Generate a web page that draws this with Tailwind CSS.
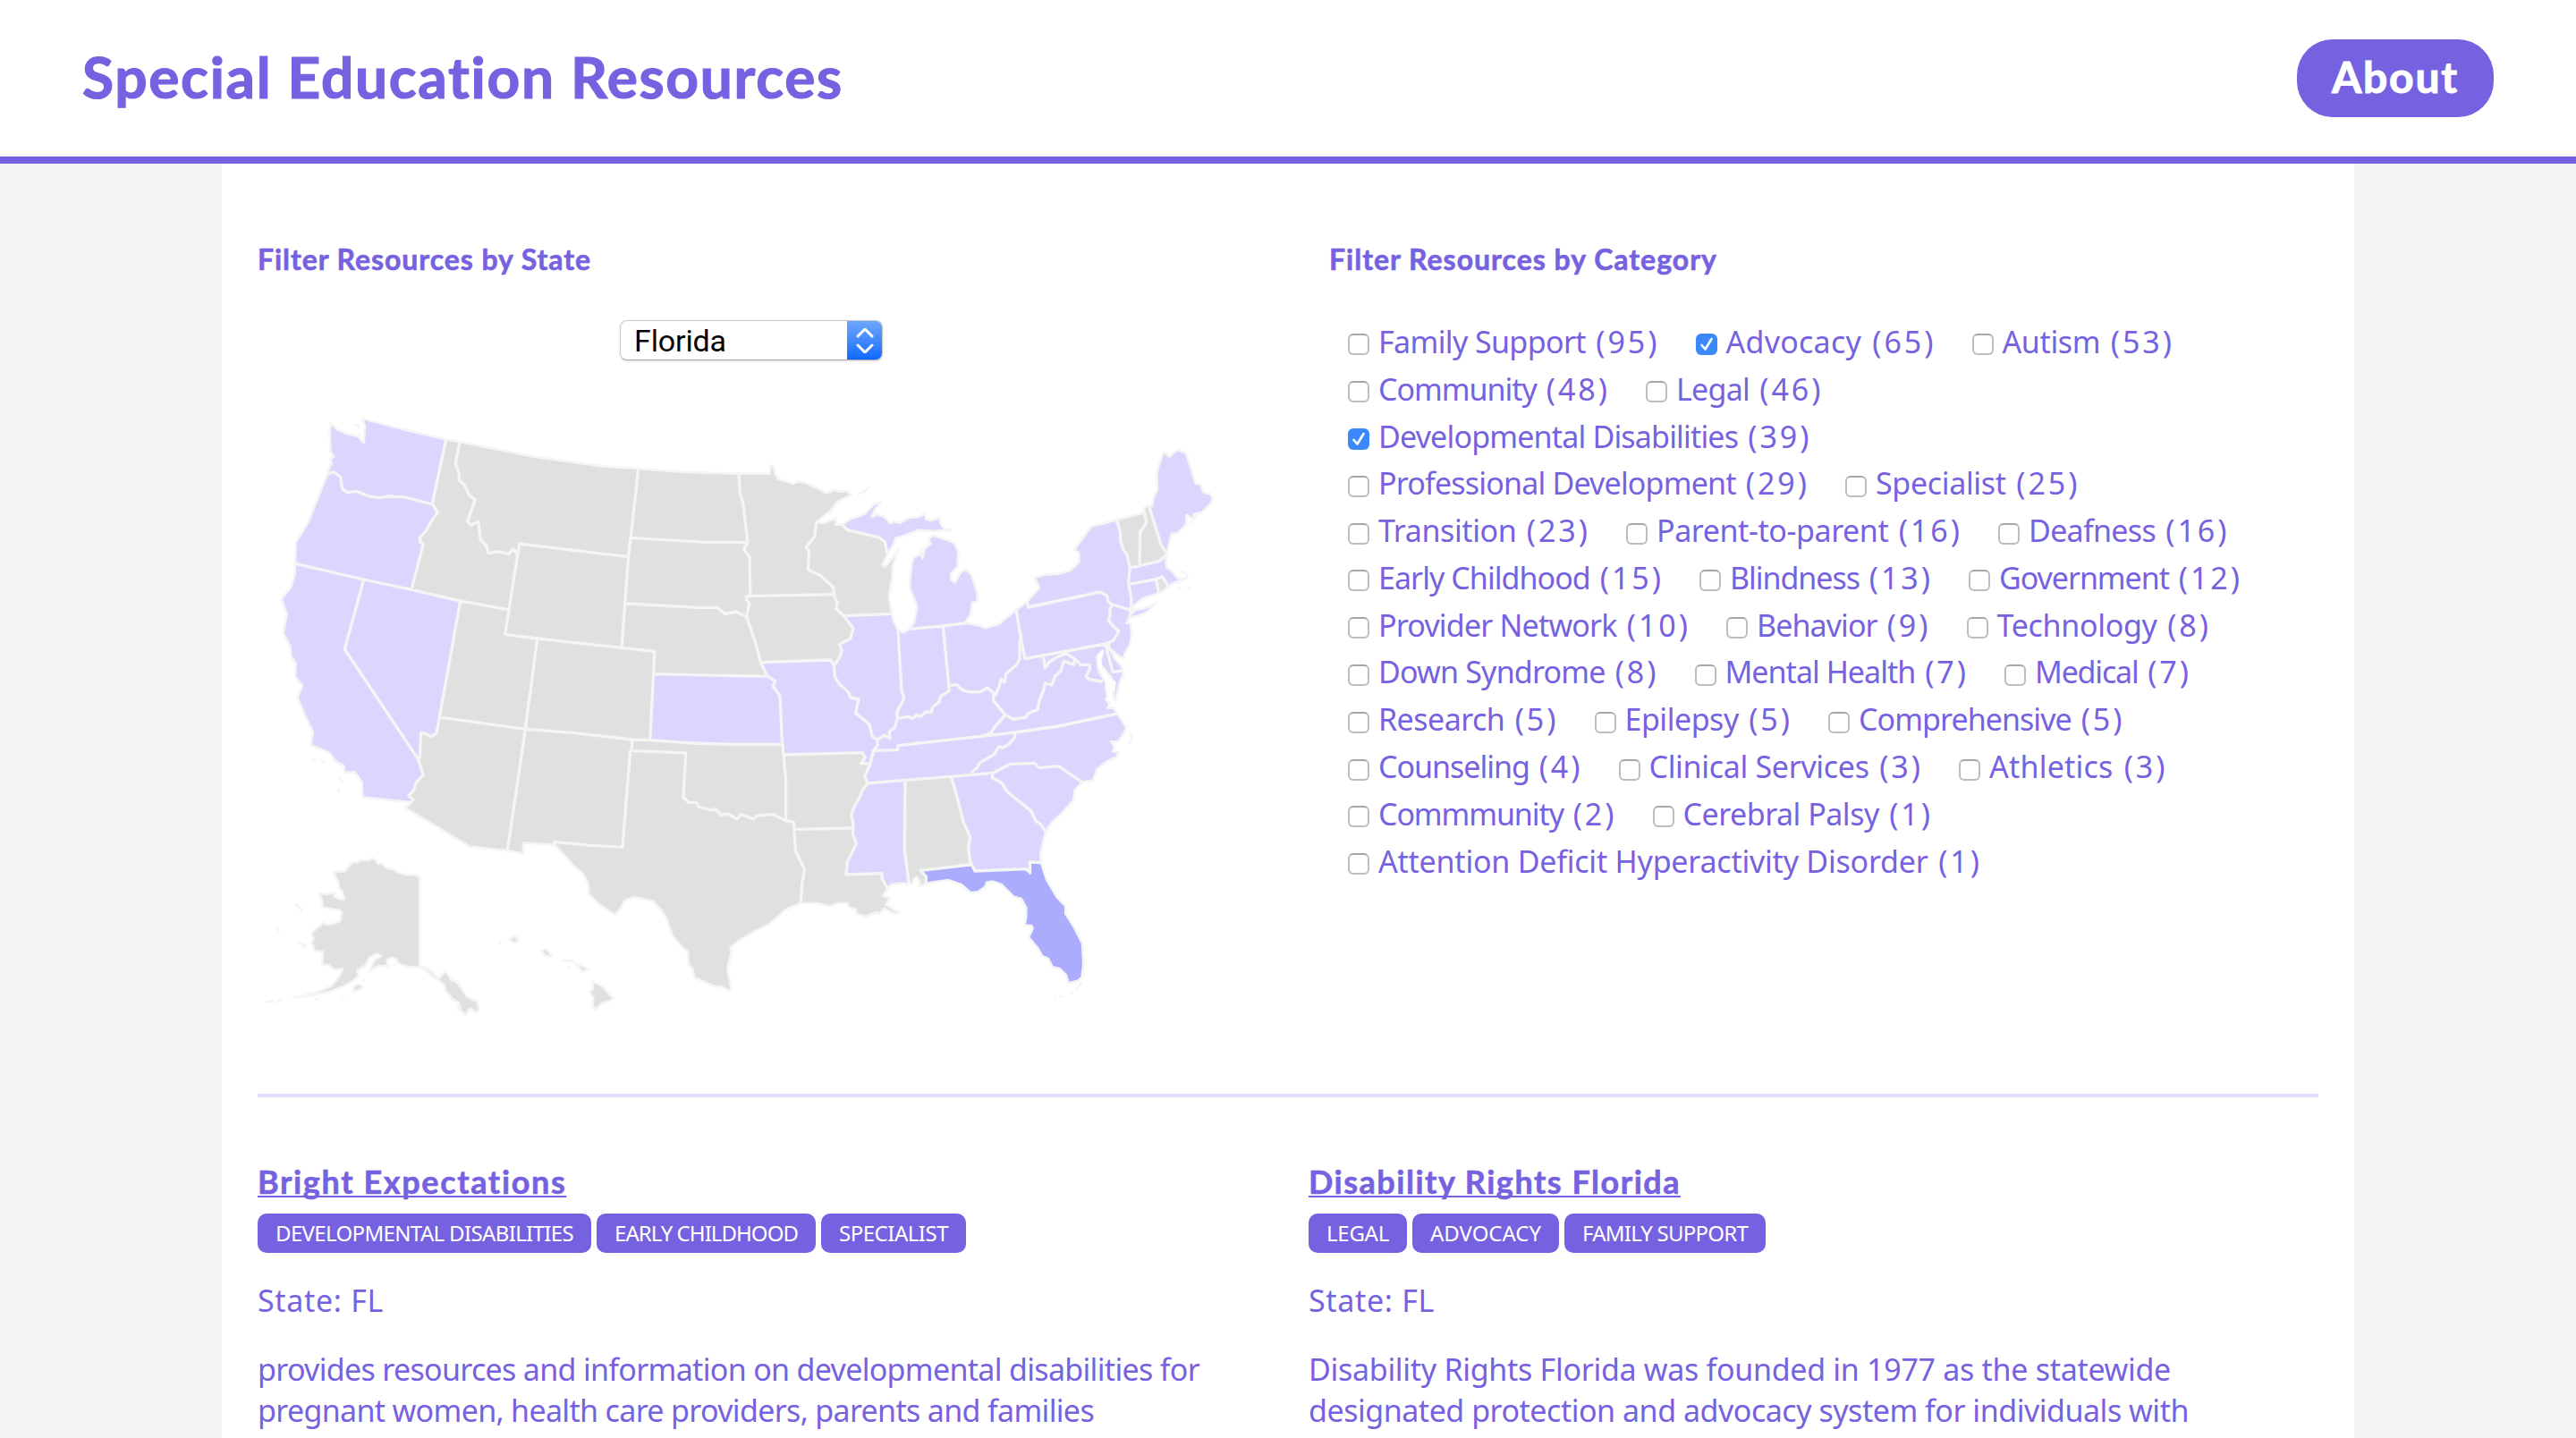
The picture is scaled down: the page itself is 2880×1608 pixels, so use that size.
<!DOCTYPE html>
<html lang="en">
<head>
<meta charset="utf-8">
<title>Special Education Resources</title>
<script src="https://cdn.jsdelivr.net/npm/@tailwindcss/browser@4"></script>
</head>
<body class="h-[1608px] overflow-hidden bg-[#f4f6f5] font-['Noto_Sans',sans-serif] text-[34px] leading-[46px] text-[#7662e0]">
<header class="flex h-[183px] items-center justify-between border-b-8 border-[#7662e0] bg-white pr-[92px] pl-[92px]">
  <h1 class="pb-1 font-['Lato',sans-serif] text-[64px] leading-[80px] font-bold whitespace-nowrap [-webkit-text-stroke:1.2px_#7662e0]"><span data-w="852">Special Education Resources</span></h1>
  <a class="flex h-[87px] w-[220px] items-center justify-center rounded-[40px] bg-[#7662e0] pb-[3px] font-['Lato',sans-serif] text-[48px] leading-[60px] font-bold whitespace-nowrap text-white [-webkit-text-stroke:1px_#fff]"><span data-w="142">About</span></a>
</header>

<main class="mx-auto h-[1425px] w-[2384px] bg-white px-10 pt-[87px]">
  <section class="flex">
    <div class="w-[1104px]">
      <h2 class="font-['Lato',sans-serif] text-[32px] leading-[40px] font-bold whitespace-nowrap [-webkit-text-stroke:0.6px_#7662e0]"><span data-w="373">Filter Resources by State</span></h2>
      <div class="mx-auto mt-[48px] flex h-[45px] w-[294px] items-stretch overflow-hidden rounded-[8px] border border-[#c9c9c9] border-b-[#ababab] bg-white shadow-sm">
        <span class="flex flex-1 items-center pl-[15px] font-['Roboto','Liberation_Sans',sans-serif] text-[34px] leading-[44px] text-black"><span data-w="103">Florida</span></span>
        <span class="-my-px -mr-px flex w-10 items-center justify-center bg-gradient-to-b from-[#6fa8fb] to-[#0566fe]">
          <svg class="h-7 w-6" viewBox="0 0 24 28" fill="none" stroke="#fff" stroke-width="3" stroke-linecap="round" stroke-linejoin="round"><path d="M4 9l8-8 8 8M4 19l8 8 8-8"/></svg>
        </span>
      </div>

      <svg class="mt-[47px] block h-[710px] w-[1096px]" viewBox="24 0 3288 2130" stroke-linejoin="round" stroke-linecap="round">
        <defs>
          <path id="usa" d="M270,70 290,90 320,104 362,114 380,136 382,100 384,80 376,54 520,92 656,124 702,132 800,152 950,182 1080,200 1180,214 1300,222 1460,234 1638,239 1742,239 1744,212 1756,214 1760,240 1770,258 1810,268 1820,273 1836,265 1860,268 1890,284 1900,286 1930,304 1945,300 1960,292 1970,300 2000,297 2016,310 1970,332 1945,365 1898,402 1920,405 1965,388 1962,410 1985,410 2010,392 2060,374 2092,340 2116,336 2095,358 2084,384 2100,376 2125,382 2145,405 2160,400 2180,404 2205,388 2240,384 2262,374 2266,392 2285,396 2310,386 2314,404 2326,422 2350,428 2290,432 2240,428 2210,440 2180,452 2165,455 2155,480 2136,510 2120,545 2128,552 2172,496 2155,545 2152,590 2142,650 2152,710 2156,730 2172,762 2190,772 2208,760 2225,740 2236,685 2210,620 2218,540 2225,520 2244,510 2248,492 2254,524 2262,490 2282,474 2274,458 2290,446 2315,454 2360,470 2368,488 2374,500 2372,550 2350,575 2350,595 2364,603 2380,572 2400,560 2418,578 2438,640 2438,668 2420,672 2416,710 2396,740 2415,742 2445,748 2465,757 2510,744 2568,696 2605,668 2646,622 2630,588 2660,578 2710,575 2750,564 2780,534 2778,504 2764,492 2785,464 2820,416 2860,406 2905,394 2998,370 2998,352 3010,346 3024,348 3026,328 3042,292 3040,240 3045,215 3063,166 3082,182 3110,158 3138,170 3170,272 3188,276 3194,298 3208,306 3216,302 3228,322 3220,340 3190,370 3165,375 3160,390 3140,378 3138,410 3110,438 3090,440 3082,470 3074,508 3070,530 3072,552 3090,565 3110,590 3132,594 3090,608 3060,632 3045,640 2990,660 2960,685 2955,710 2950,722 2938,740 2952,742 2956,780 2950,810 2932,845 2928,860 2905,845 2882,825 2900,860 2922,885 2928,910 2916,940 2908,970 2902,998 2894,995 2898,940 2885,920 2872,905 2860,890 2850,875 2858,835 2840,850 2842,885 2850,910 2870,940 2868,960 2875,985 2868,995 2882,1010 2875,1025 2895,1025 2908,1045 2938,1090 2930,1110 2910,1138 2887,1138 2900,1158 2892,1170 2912,1175 2905,1190 2870,1205 2840,1230 2826,1268 2790,1274 2765,1300 2760,1335 2720,1380 2692,1405 2668,1438 2650,1510 2652,1544 2670,1600 2705,1660 2734,1690 2734,1715 2765,1765 2790,1815 2794,1885 2788,1930 2775,1940 2744,1948 2735,1920 2715,1900 2690,1894 2675,1865 2656,1858 2640,1830 2610,1794 2624,1765 2620,1756 2596,1754 2601,1730 2602,1695 2585,1665 2560,1658 2520,1618 2490,1607 2470,1610 2465,1625 2440,1642 2415,1645 2385,1618 2340,1602 2268,1613 2246,1624 2244,1605 2234,1592 2224,1600 2220,1615 2205,1616 2175,1613 2148,1618 2136,1632 2122,1655 2145,1662 2132,1685 2176,1712 2160,1716 2125,1698 2108,1716 2098,1710 2062,1726 2032,1714 2030,1700 2010,1695 2000,1680 1972,1680 1940,1690 1905,1680 1845,1680 1795,1702 1740,1750 1690,1775 1640,1804 1610,1828 1613,1845 1600,1900 1613,1968 1605,1973 1580,1960 1555,1958 1490,1930 1483,1900 1470,1885 1466,1842 1450,1830 1415,1788 1395,1730 1380,1705 1350,1673 1285,1659 1255,1672 1240,1700 1224,1718 1185,1695 1160,1675 1135,1650 1132,1612 1115,1582 1080,1550 1050,1515 1020,1484 916,1478 914,1513 862,1504 735,1490 520,1360 535,1341 376,1325 374,1275 350,1240 318,1242 312,1218 290,1208 262,1174 202,1150 210,1106 180,1045 158,990 174,950 150,920 152,876 136,850 134,820 110,772 122,710 104,660 135,620 148,580 150,540 152,470 195,400 230,310 260,238 262,222 272,205 268,190 280,182 268,165 266,100Z"/>
          <clipPath id="land"><use href="#usa"/></clipPath>
        </defs>
        <use href="#usa" fill="#dcd6fe"/>
        <g clip-path="url(#land)">
          <!-- states without resources -->
          <g fill="#dfe1e0">
            <path d="M656,124 610,340 628,370 604,402 590,430 568,452 570,470 580,474 540,628 704,666 634,1056 624,1110 605,1122 590,1112 572,1108 568,1190 562,1198 580,1250 556,1275 548,1300 530,1320 546,1332 535,1345 500,1360 700,2000 2200,2000 2200,1690 2136,1628 2118,1598 2118,1580 1998,1584 2002,1542 2032,1480 2020,1445 2022,1420 2016,1382 2026,1355 2046,1320 2050,1305 2070,1278 2060,1255 2078,1215 2048,1210 2062,1192 2052,1175 1790,1181 1782,1117 1776,985 1752,952 1760,935 1735,919 1712,872 1945,864 1957,882 1974,860 1984,832 1975,812 2012,792 2022,758 1992,718 2150,709 2200,600 2200,480 2136,506 2128,468 2106,452 2002,428 1985,410 2016,312 2016,250 1800,180Z"/>
            <path d="M2196,1270 2350,1257 2365,1305 2392,1410 2414,1458 2408,1490 2412,1551 2248,1570 2266,1590 2266,1640 2209,1640 2209,1615 2194,1505Z"/>
            <path d="M2905,390 2998,340 3014,345 3055,480 3078,508 3050,532 2950,555 2940,510 2928,495 2918,465 2918,435Z"/>
            <path d="M3038,593 3058,584 3085,618 3046,645Z"/>
          </g>
          <path fill="#dcd6fe" d="M1352,911 1735,919 1760,935 1752,952 1776,985 1782,1147 1620,1147 1340,1132Z"/>
          <path fill="#acacff" d="M2412,1551 2430,1572 2602,1565 2615,1578 2614,1542 2660,1544 2850,1700 2850,2000 2700,2000 2266,1650 2266,1590 2248,1570Z"/>
        </g>
        <g fill="none" stroke="#f4f6f5" stroke-width="10">
          <use href="#usa" stroke-width="8"/>
          <path d="M656,124 610,340 628,370 604,402 590,430 568,452 570,470 580,474 540,628M260,238 280,234 302,250 308,290 325,302 355,298 400,315 435,320 460,315 520,318 610,342M152,541 380,594 540,628 704,666 864,695M380,594 316,828 562,1196M704,666 634,1056 624,1110 605,1122 590,1112 572,1108 568,1190 562,1198 580,1250 556,1275 548,1300 530,1320 546,1332 535,1345 520,1358M702,132 688,205 700,240 700,262 716,275 735,312 754,326 728,398 740,412 764,400 772,460 792,482 798,506 830,500 866,508 882,492 894,508M1268,518 1140,503 902,474 854,778 962,792 1080,805 1245,823 1355,835 1352,910 1340,1130M962,794 922,1096 862,1504M634,1056 922,1096 1080,1108 1281,1131 1342,1133 1480,1143 1620,1147 1782,1147M1352,911 1735,919M1301,225 1268,518 1245,820M1282,455 1510,468 1666,470M1262,675 1500,688 1565,688 1592,710 1628,702 1666,720M1638,240 1642,305 1652,335 1668,470 1655,494 1674,518 1677,648M1664,650 1958,644M1664,650 1664,662 1673,675 1664,720 1692,800 1712,875 1735,919 1760,935 1752,952 1776,985 1782,1117 1788,1185 1796,1270 1796,1405M1712,872 1945,864 1957,882M1898,402 1892,450 1864,485 1874,500 1870,560 1910,580 1954,618 1960,655 1968,670 1964,692 1992,718 2022,758 2012,792 1975,812 1984,832 1974,860 1957,882 1960,920 1975,945 2006,972 2012,990 2040,996 2030,1042 2075,1078 2086,1120 2102,1134 2104,1150 2090,1168 2078,1215 2060,1255 2070,1278 2050,1305 2046,1320 2026,1355 2016,1382 2022,1420 2020,1445 2032,1480 2002,1542 1998,1584 2118,1580 2118,1598 2136,1628M1992,716 2150,709M1985,410 2002,428 2106,452 2128,468 2136,506"/>
          <path d="M2172,768 2184,965 2192,992 2168,1040 2170,1058 2162,1090 2142,1105 2145,1125 2125,1117 2102,1132M2208,760 2323,750 2400,740M2323,750 2344,968 2315,985 2310,1005 2288,1022 2284,1040 2265,1038 2248,1054 2235,1048 2222,1060 2205,1054 2168,1060M2344,950 2370,947 2388,965 2415,972 2450,970 2472,958 2500,980 2512,950 2518,928 2530,938 2535,910 2570,880 2580,860 2580,800 2586,785M2568,696 2585,795 2598,860 2868,810M2605,668 2608,687 2850,636 2872,648 2878,668 2890,678 2882,695 2884,715 2877,732 2912,768 2895,798 2868,810M2868,812 2892,904 2926,900M2890,678 2948,695M2878,812 2882,830M2660,855 2665,890 2680,870 2705,855 2735,842 2765,860 2785,880 2815,880 2815,895 2802,920 2815,930 2855,936M2500,980 2492,985 2492,1000 2532,1048 2558,1063 2600,1056 2610,1042 2640,1030 2646,1000 2660,965 2665,942 2688,948 2698,920 2718,900 2728,868 2762,880 2764,860M2532,1048 2495,1090 2482,1110 2450,1120M2088,1168 2170,1166 2172,1152 2180,1150 2450,1120 2565,1107 2710,1086 2908,1044M2565,1107 2562,1125 2545,1145 2525,1158 2510,1155 2495,1180 2445,1210 2438,1225 2420,1240M2070,1278 2160,1270 2350,1255 2490,1243 2550,1213 2630,1210 2646,1226 2710,1220 2790,1274M2490,1243 2488,1260 2518,1275 2540,1308 2618,1370 2635,1405 2650,1415 2668,1440M2350,1255 2365,1305 2392,1410 2414,1458 2408,1490 2414,1540 2430,1572 2602,1565 2615,1578 2614,1542 2652,1544M2412,1551 2248,1570 2266,1590 2266,1615M2196,1270 2194,1505 2209,1615M1788,1182 2052,1175 2062,1192 2048,1210 2078,1213M1830,1432 2020,1428M1281,1131 1278,1168M1274,1168 1460,1176 1452,1325 1470,1342 1495,1342 1502,1356 1545,1368 1560,1364 1580,1385 1602,1380 1632,1398 1645,1382 1688,1398 1700,1386 1755,1382 1795,1403 1822,1408 1828,1505 1858,1565 1850,1620 1845,1680M1274,1168 1248,1492 1140,1486 1018,1474 1020,1484M2905,394 2918,435 2918,465 2928,495 2940,510 2950,555 2945,605 2955,660 2952,710 2946,728M2998,370 3006,402 2984,435 2982,550M2950,555 3050,532 3074,510M3014,348 3055,480 3074,505M2947,610 3038,593 3058,584 3080,618M3038,593 3046,638"/>
          <!-- Chesapeake and Cape Cod -->
          <path d="M2858,835 2846,860 2852,895 2872,925 2876,950M2898,940 2894,960" stroke="#fff"/>
          <path d="M3118,568 3135,570 3144,588 3120,600 3100,605M3112,624 3118,622M3146,622 3147,621M2953,1110 2956,1135 2948,1141" stroke-width="8"/>
          <!-- Puget Sound, Channel Islands, Florida Keys -->
          <path d="M350,76 364,76 360,86M366,102 364,110M212,1200 220,1200M232,1197 246,1204M300,1262 310,1272M293,1298 298,1306M2788,1945 2774,1966M2755,1980 2748,1984M2725,1991 2715,1994M2702,2001 2703,2001M2796,1918 2790,1930M3180,372 3160,395M3152,400 3152,406" stroke-width="8"/>
        </g>
        <g stroke="#f4f6f5" stroke-width="8" fill="#dcd6fe">
          <path d="M2950,715 2968,696 3000,690 3040,672 3010,700 2990,712 2950,722Z"/>
          <path d="M2040,308 2062,300 2074,284 2056,300Z" stroke-width="6"/>
        </g>
        <!-- Alaska and Hawaii -->
        <g transform="translate(0 1350)" fill="#dfe1e0" stroke="#f4f6f5" stroke-width="8">
          <path d="M568,243 550,234 525,235 495,226 480,217 455,212 440,195 428,198 422,188 408,178 400,186 372,186 360,192 340,194 318,222 278,226 296,262 296,280 308,290 314,316 300,316 280,306 284,294 262,298 230,298 240,320 242,342 262,348 300,354 306,362 300,390 280,398 258,402 245,395 210,425 205,435 212,450 205,465 216,490 242,492 240,535 262,538 280,552 310,550 292,585 270,608 230,625 190,635 160,645 190,642 262,628 310,610 340,594 364,572 358,555 385,540 400,512 425,500 438,508 415,520 402,556 430,540 460,540 458,520 475,512 490,518 495,530 520,542 568,546 590,545 632,582 655,556 672,585 694,596 728,645 762,660 765,688 758,698 738,682 722,706 705,690 700,665 680,655 655,625 650,605 632,590 605,572 585,552 568,546Z"/>
          <path d="M345,608 365,600 378,612 348,628ZM165,464 186,468 180,478ZM868,452 880,442 896,445 894,462 880,462ZM976,490 992,482 1012,508 988,506ZM1088,534 1110,540 1136,552 1115,560ZM1146,592 1180,608 1202,634 1220,648 1205,658 1180,665 1158,687 1148,675 1150,650 1138,628 1150,615Z"/>
          <path fill="none" d="M152,336 168,346 174,360M90,416 95,423M54,661 74,657M88,660 100,655M144,645 156,643M218,650 228,655M310,653 311,653M375,590 380,588M837,464 840,461M1046,522 1082,524M1067,544 1070,546M460,545 466,538M484,535 486,535M675,650 684,655M695,676 697,686"/>
        </g>
      </svg>
    </div>

    <div class="ml-[94px]">
      <h2 class="font-['Lato',sans-serif] text-[32px] leading-[40px] font-bold whitespace-nowrap [-webkit-text-stroke:0.6px_#7662e0]"><span data-w="434">Filter Resources by Category</span></h2>
      <div id="categories" class="mt-[45px] ml-[21px]"></div>
    </div>
  </section>

  <hr class="mt-[63px] h-1 border-0 bg-[#dfdfff]">

  <section class="mt-[72px] flex whitespace-nowrap">
    <article class="w-[1175px]">
      <h3 class="font-['Lato',sans-serif] text-[36px] leading-[44px] font-bold underline decoration-2 underline-offset-[2px] [-webkit-text-stroke:0.6px_#7662e0] [text-decoration-skip-ink:none]"><span data-w="346">Bright Expectations</span></h3>
      <div class="mt-[14px] flex gap-[6px] text-[24px] leading-[44px] text-white">
        <span class="flex w-[373px] justify-center rounded-[10px] bg-[#7662e0]"><span data-w="333">DEVELOPMENTAL DISABILITIES</span></span>
        <span class="flex w-[245px] justify-center rounded-[10px] bg-[#7662e0]"><span data-w="205">EARLY CHILDHOOD</span></span>
        <span class="flex w-[162px] justify-center rounded-[10px] bg-[#7662e0]"><span data-w="122">SPECIALIST</span></span>
      </div>
      <p class="mt-[30px]"><span data-w="141">State: FL</span></p>
      <p class="mt-[31px]"><span data-w="1053">provides resources and information on developmental disabilities for</span><br><span data-w="935">pregnant women, health care providers, parents and families</span></p>
    </article>
    <article>
      <h3 class="font-['Lato',sans-serif] text-[36px] leading-[44px] font-bold underline decoration-2 underline-offset-[2px] [-webkit-text-stroke:0.6px_#7662e0] [text-decoration-skip-ink:none]"><span data-w="416">Disability Rights Florida</span></h3>
      <div class="mt-[14px] flex gap-[6px] text-[24px] leading-[44px] text-white">
        <span class="flex w-[110px] justify-center rounded-[10px] bg-[#7662e0]"><span data-w="70">LEGAL</span></span>
        <span class="flex w-[164px] justify-center rounded-[10px] bg-[#7662e0]"><span data-w="124">ADVOCACY</span></span>
        <span class="flex w-[225px] justify-center rounded-[10px] bg-[#7662e0]"><span data-w="185">FAMILY SUPPORT</span></span>
      </div>
      <p class="mt-[30px]"><span data-w="141">State: FL</span></p>
      <p class="mt-[31px]"><span data-w="964">Disability Rights Florida was founded in 1977 as the statewide</span><br><span data-w="984">designated protection and advocacy system for individuals with</span></p>
    </article>
  </section>
</main>

<script>
// rows of [label, count, label width, checked]
const rows = [
  [['Family Support',95,312],['Advocacy',65,232.5,1],['Autism',53,190]],
  [['Community',48,256.5],['Legal',46,162]],
  [['Developmental Disabilities',39,482,1]],
  [['Professional Development',29,479.5],['Specialist',25,226]],
  [['Transition',23,234.5],['Parent-to-parent',16,339.5],['Deafness',16,222]],
  [['Early Childhood',15,316.5],['Blindness',13,224.5],['Government',12,269.5]],
  [['Provider Network',10,346.5],['Behavior',9,192],['Technology',8,237]],
  [['Down Syndrome',8,311],['Mental Health',7,270],['Medical',7,172.5]],
  [['Research',5,199],['Epilepsy',5,185],['Comprehensive',5,295]],
  [['Counseling',4,226],['Clinical Services',3,304],['Athletics',3,197]],
  [['Commmunity',2,264],['Cerebral Palsy',1,277]],
  [['Attention Deficit Hyperactivity Disorder',1,672.5]]
];
const box = '<span class="mt-2 h-6 w-6 rounded-[6px] border-2 border-[#bdbdbd] border-t-[#a6a6a6] bg-white"></span>';
const tick = '<span class="mt-2 flex h-6 w-6 items-center justify-center rounded-[6px] bg-[#3b88fd]"><svg class="h-5 w-5" viewBox="0 0 20 20" fill="none" stroke="#fff" stroke-width="2.6" stroke-linecap="round" stroke-linejoin="round"><path d="M4.5 11l4 4.5L15.500 4"/></svg></span>';
document.getElementById('categories').innerHTML = rows.map(r =>
  '<div class="flex h-[52.8px] items-center gap-[41px]">' + r.map(([n, c, w, on]) =>
    '<label class="flex items-center gap-[10px] leading-[52px] whitespace-nowrap">' + (on ? tick : box) +
    `<span class="flex pt-px" style="width:${w + 1.5}px"><span class="cat flex-none whitespace-pre">${n} </span><span class="ml-[3px] flex-none tracking-[3px]">(${c})</span></span></label>`
  ).join('') + '</div>').join('');

// spread each text over its set width
function fit(el, w) {
  el.style.letterSpacing = '0px';
  el.style.letterSpacing = (w - el.getBoundingClientRect().width) / el.textContent.length + 'px';
}
function fitAll() {
  document.querySelectorAll('[data-w]').forEach(el => fit(el, +el.dataset.w));
  document.querySelectorAll('.cat').forEach(el =>
    fit(el, parseFloat(el.parentNode.style.width) - el.nextSibling.getBoundingClientRect().width - 2));
}
fitAll();
addEventListener('load', fitAll);
document.fonts.ready.then(fitAll);
new ResizeObserver(fitAll).observe(document.querySelector('main'));
new ResizeObserver(fitAll).observe(document.querySelector('h1'));
</script>
</body>
</html>
